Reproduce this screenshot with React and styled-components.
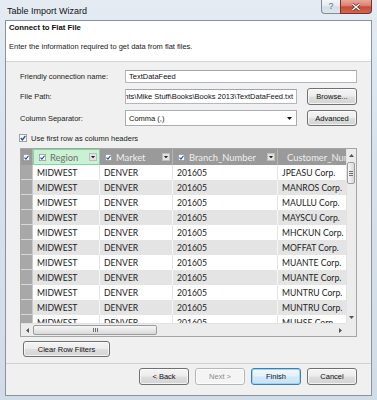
import styled, { createGlobalStyle } from 'styled-components';

const UI = '"Liberation Sans", Arial, sans-serif';
const CELL = 'Lato, "Liberation Sans", sans-serif';

const GlobalStyle = createGlobalStyle`
  html, body { margin: 0; padding: 0; background: #fff; }
  body { font-family: ${UI}; }
  * { box-sizing: border-box; }
`;

const columns = [
  { name: 'Region', width: 67, active: true, filter: true },
  { name: 'Market', width: 73, filter: true },
  { name: 'Branch_Number', width: 105, filter: true },
  { name: 'Customer_Number', width: 69 },
];

const customers = [
  'JPEASU', 'MANROS', 'MAULLU', 'MAYSCU', 'MHCKUN', 'MOFFAT',
  'MUANTE', 'MUANTE', 'MUNTRU', 'MUNTRU', 'MUHSE',
];

function CheckMark({ size = 8 }) {
  return (
    <svg width={size} height={size} viewBox="0 0 10 10">
      <rect x="0.5" y="0.5" width="9" height="9" fill="#f7f9fb" stroke="#8e9196" />
      <path d="M2.2 5.1 L4.2 7.3 L7.9 2.5" fill="none" stroke="#2c5295" strokeWidth="1.7" />
    </svg>
  );
}

function Tri({ dir = 'down', color = '#222', w = 5, h = 3 }) {
  const paths = {
    down: `M0 0H${w}L${w / 2} ${h}Z`,
    up: `M0 ${h}H${w}L${w / 2} 0Z`,
  };
  return (
    <svg width={w} height={h} viewBox={`0 0 ${w} ${h}`}>
      <path d={paths[dir]} fill={color} />
    </svg>
  );
}

function TriSide({ dir = 'left', color = '#555' }) {
  const d = dir === 'left' ? 'M3 0V5L0 2.5Z' : 'M0 0V5L3 2.5Z';
  return (
    <svg width="3" height="5" viewBox="0 0 3 5">
      <path d={d} fill={color} />
    </svg>
  );
}

export default function App() {
  return (
    <>
      <GlobalStyle />
      <Window>
        <TitleBar>
          <Title>Table Import Wizard</Title>
          <Caption>
            <HelpButton>?</HelpButton>
            <CloseButton>
              <svg width="10" height="8" viewBox="0 0 10 8">
                <path d="M1.5 1 L8.5 7 M8.5 1 L1.5 7" stroke="#5a1d14" strokeWidth="2.6" />
                <path d="M1.5 1 L8.5 7 M8.5 1 L1.5 7" stroke="#fff" strokeWidth="1.5" />
              </svg>
            </CloseButton>
          </Caption>
        </TitleBar>

        <Client>
          <Banner>
            <BannerTitle>Connect to Flat File</BannerTitle>
            <BannerText>Enter the information required to get data from flat files.</BannerText>
          </Banner>

          <Body>
            <Form>
              <Label>Friendly connection name:</Label>
              <TextBox $h={13} $span>TextDataFeed</TextBox>

              <Label>File Path:</Label>
              <TextBox $h={15} $end>
                <span>Documents\Mike Stuff\Books\Books 2013\TextDataFeed.txt</span>
              </TextBox>
              <Button $h={17}>Browse...</Button>

              <Label>Column Separator:</Label>
              <Select>
                <span>Comma (,)</span>
                <Tri w={5} h={3} color="#111" />
              </Select>
              <Button $h={16}>Advanced</Button>
            </Form>

            <CheckRow>
              <CheckMark size={8} />
              <span>Use first row as column headers</span>
            </CheckRow>

            <DataGrid>
              <Viewport>
                <HeaderRow>
                  <SelectorHead>
                    <CheckMark size={7} />
                  </SelectorHead>
                  {columns.map((c) => (
                    <HeadCell key={c.name} $w={c.width} $active={c.active}>
                      <CheckMark size={7} />
                      <HeadLabel $active={c.active}>{c.name}</HeadLabel>
                      {c.filter && (
                        <FilterButton>
                          <Tri w={4} h={2.5} color="#222" />
                        </FilterButton>
                      )}
                    </HeadCell>
                  ))}
                </HeaderRow>
                {customers.map((cust, i) => (
                  <DataRow key={i} $alt={i % 2 === 1}>
                    <SelectorCell />
                    <Cell $w={columns[0].width} $alt={i % 2 === 1}>MIDWEST</Cell>
                    <Cell $w={columns[1].width} $alt={i % 2 === 1}>DENVER</Cell>
                    <Cell $w={columns[2].width} $alt={i % 2 === 1}>201605</Cell>
                    <Cell $w={columns[3].width} $alt={i % 2 === 1}>{cust} Corp.</Cell>
                  </DataRow>
                ))}
              </Viewport>

              <VScroll>
                <ArrowBox>
                  <Tri dir="up" w={5} h={3} color="#555" />
                </ArrowBox>
                <VThumb>
                  <Grip $vertical />
                </VThumb>
                <Spacer />
                <ArrowBox>
                  <Tri dir="down" w={5} h={3} color="#555" />
                </ArrowBox>
              </VScroll>

              <HScroll>
                <ArrowBox $h>
                  <TriSide dir="left" />
                </ArrowBox>
                <HThumb>
                  <Grip />
                </HThumb>
                <Spacer />
                <ArrowBox $h>
                  <TriSide dir="right" />
                </ArrowBox>
              </HScroll>
              <Corner />
            </DataGrid>

            <ClearButton>Clear Row Filters</ClearButton>
          </Body>

          <Footer>
            <Button $w={50} $h={17}>&lt; Back</Button>
            <Button $w={50} $h={17} $disabled>Next &gt;</Button>
            <Button $w={50} $h={17} $default>Finish</Button>
            <Button $w={50} $h={17}>Cancel</Button>
          </Footer>
        </Client>
      </Window>
    </>
  );
}

/* ---------- window frame ---------- */

const Window = styled.div`
  width: 377px;
  height: 400px;
  padding: 0 5px 4px 5px;
  display: flex;
  flex-direction: column;
  background: linear-gradient(180deg, #e4ebf3 0%, #d8e1eb 40%, #d2dce7 100%);
  font-family: ${UI};
`;

const TitleBar = styled.div`
  height: 20px;
  display: flex;
  justify-content: space-between;
  align-items: flex-start;
`;

const Title = styled.div`
  padding: 6px 0 0 2px;
  font-size: 9px;
  line-height: 11px;
  color: #111;
`;

const Caption = styled.div`
  display: flex;
`;

const HelpButton = styled.div`
  width: 19px;
  height: 14px;
  border: 1px solid #7d8b9b;
  border-top: none;
  border-right: none;
  border-radius: 0 0 0 4px;
  background: linear-gradient(180deg, #f3f6f9 0%, #e2e9f0 48%, #d2dbe5 52%, #dfe6ee 100%);
  color: #5d6b7a;
  font-size: 9px;
  line-height: 13px;
  text-align: center;
`;

const CloseButton = styled.div`
  width: 32px;
  height: 14px;
  border: 1px solid #7a3128;
  border-top: none;
  border-radius: 0 0 4px 0;
  background: linear-gradient(180deg, #e9a899 0%, #d9806f 45%, #c64b37 52%, #d3664f 100%);
  display: flex;
  align-items: center;
  justify-content: center;
`;

const Client = styled.div`
  flex: 1;
  min-height: 0;
  display: flex;
  flex-direction: column;
  border: 1px solid #8594a5;
  background: #f0f0f0;
`;

/* ---------- banner ---------- */

const Banner = styled.div`
  height: 41px;
  padding: 2px 0 0 3px;
  background: #fff;
  border-bottom: 1px solid #d5d5d5;
`;

const BannerTitle = styled.div`
  font-size: 7.75px;
  line-height: 9px;
  font-weight: bold;
  color: #111;
`;

const BannerText = styled.div`
  margin-top: 10px;
  font-size: 7.5px;
  line-height: 9px;
  color: #1a1a1a;
`;

/* ---------- form ---------- */

const Body = styled.div`
  flex: 1;
  display: flex;
  flex-direction: column;
  padding: 8px 14px 0 14px;
`;

const Form = styled.div`
  display: grid;
  grid-template-columns: 95px 1fr 50px;
  grid-template-rows: 13px 17px 16px;
  column-gap: 10px;
  row-gap: 5px;
  align-items: center;
`;

const Label = styled.div`
  font-size: 7.5px;
  color: #1a1a1a;
  white-space: nowrap;
`;

const TextBox = styled.div`
  grid-column: ${(p) => (p.$span ? '2 / 4' : 'auto')};
  height: ${(p) => p.$h}px;
  display: flex;
  align-items: center;
  justify-content: ${(p) => (p.$end ? 'flex-end' : 'flex-start')};
  overflow: hidden;
  padding: 0 3px;
  white-space: nowrap;
  background: #fff;
  border: 1px solid #b4b7bd;
  border-top-color: #a3a6ac;
  font-size: 7.5px;
  color: #111;
`;

const Select = styled.div`
  height: 16px;
  display: flex;
  align-items: center;
  justify-content: space-between;
  padding: 0 4px 0 3px;
  background: #fff;
  border: 1px solid #a9acb2;
  font-size: 7.5px;
  color: #111;
`;

const Button = styled.div`
  width: ${(p) => (p.$w ? `${p.$w}px` : 'auto')};
  height: ${(p) => p.$h}px;
  display: flex;
  align-items: center;
  justify-content: center;
  border-radius: 3px;
  font-size: 7.5px;
  white-space: nowrap;
  border: 1px solid ${(p) => (p.$default ? '#3c7fb1' : p.$disabled ? '#b4b8bb' : '#707070')};
  color: ${(p) => (p.$disabled ? '#8a8a8a' : '#111')};
  background: ${(p) =>
    p.$default
      ? 'linear-gradient(180deg, #f1f8fd 0%, #e3f1fb 48%, #d2e9f8 52%, #c9e3f5 100%)'
      : p.$disabled
      ? '#f4f4f4'
      : 'linear-gradient(180deg, #f4f4f4 0%, #ececec 48%, #dedede 52%, #d4d4d4 100%)'};
  box-shadow: ${(p) => (p.$default ? 'inset 0 0 0 1px #9fd2f3' : 'inset 0 0 0 1px rgba(255,255,255,0.7)')};
`;

const CheckRow = styled.div`
  margin: 7px 0 0 -1px;
  height: 10px;
  display: flex;
  align-items: center;
  gap: 4px;
  font-size: 7.5px;
  color: #1a1a1a;
`;

/* ---------- data grid ---------- */

const DataGrid = styled.div`
  margin-top: 5px;
  height: 189px;
  display: grid;
  grid-template-columns: minmax(0, 1fr) 10px;
  grid-template-rows: minmax(0, 1fr) 13px;
  border: 1px solid #a4a4a4;
  background: #fff;
`;

const Viewport = styled.div`
  overflow: hidden;
  min-width: 0;
  min-height: 0;
`;

const HeaderRow = styled.div`
  height: 16px;
  display: flex;
  background: #9a9a9a;
`;

const SelectorHead = styled.div`
  width: 12px;
  flex: none;
  display: flex;
  align-items: center;
  justify-content: center;
  border-right: 1px solid #b3b3b3;
`;

const HeadCell = styled.div`
  width: ${(p) => p.$w}px;
  flex: none;
  display: flex;
  align-items: center;
  padding: 0 2px 0 5px;
  gap: 4px;
  overflow: hidden;
  background: ${(p) => (p.$active ? '#c9f1d3' : '#9a9a9a')};
  border: ${(p) => (p.$active ? '1px solid #88d39c' : 'none')};
  border-right: 1px solid ${(p) => (p.$active ? '#88d39c' : '#b5b5b5')};
`;

const HeadLabel = styled.span`
  font-family: ${CELL};
  font-size: 9.4px;
  white-space: nowrap;
  color: ${(p) => (p.$active ? '#6f6f6f' : '#eeeeee')};
`;

const FilterButton = styled.span`
  width: 8px;
  height: 8px;
  flex: none;
  margin-left: auto;
  display: flex;
  align-items: center;
  justify-content: center;
  background: #e2e2e2;
  border: 1px solid #bdbdbd;
`;

const DataRow = styled.div`
  height: 15px;
  flex: none;
  display: flex;
  background: ${(p) => (p.$alt ? '#e4e4e4' : '#fff')};
`;

const SelectorCell = styled.div`
  width: 12px;
  flex: none;
  background: #a8a8a8;
  border-bottom: 1px solid #d8d8d8;
  border-right: 1px solid #c8c8c8;
`;

const Cell = styled.div`
  width: ${(p) => p.$w}px;
  flex: none;
  display: flex;
  align-items: center;
  padding-left: 4px;
  overflow: hidden;
  white-space: nowrap;
  font-family: ${CELL};
  font-size: 8.6px;
  color: #222;
  border-right: 1px solid ${(p) => (p.$alt ? '#f6f6f6' : '#e4e4e4')};
`;

const VScroll = styled.div`
  display: flex;
  flex-direction: column;
  min-height: 0;
  background: #ececec;
  border-left: 1px solid #e2e2e2;
`;

const HScroll = styled.div`
  display: flex;
  background: #ececec;
  border-top: 1px solid #e2e2e2;
`;

const ArrowBox = styled.div`
  flex: none;
  width: ${(p) => (p.$h ? '12px' : '100%')};
  height: ${(p) => (p.$h ? '100%' : '12px')};
  display: flex;
  align-items: center;
  justify-content: center;
`;

const Spacer = styled.div`
  flex: 1;
`;

const VThumb = styled.div`
  margin: 1px 1px 0 0;
  height: 22px;
  flex: none;
  display: flex;
  align-items: center;
  justify-content: center;
  border: 1px solid #9c9c9c;
  border-radius: 2px;
  background: linear-gradient(90deg, #f6f6f6 0%, #e8e8e8 50%, #d9d9d9 100%);
`;

const HThumb = styled.div`
  width: 124px;
  margin: 1px 0 1px 0;
  display: flex;
  align-items: center;
  justify-content: center;
  border: 1px solid #9c9c9c;
  border-radius: 2px;
  background: linear-gradient(180deg, #f6f6f6 0%, #e8e8e8 50%, #d9d9d9 100%);
`;

const Grip = styled.div`
  width: ${(p) => (p.$vertical ? '4px' : '5px')};
  height: ${(p) => (p.$vertical ? '5px' : '4px')};
  background: ${(p) =>
    p.$vertical
      ? 'repeating-linear-gradient(180deg, #6f6f6f 0 1px, transparent 1px 2px)'
      : 'repeating-linear-gradient(90deg, #6f6f6f 0 1px, transparent 1px 2px)'};
`;

const Corner = styled.div`
  background: #ececec;
`;

const ClearButton = styled(Button)`
  width: 87px;
  height: 16px;
  margin: 4px 0 0 3px;
`;

/* ---------- footer ---------- */

const Footer = styled.div`
  display: flex;
  justify-content: flex-end;
  gap: 6px;
  padding: 4px 14px 10px 0;
  border-top: 1px solid #d2d2d2;
`;
